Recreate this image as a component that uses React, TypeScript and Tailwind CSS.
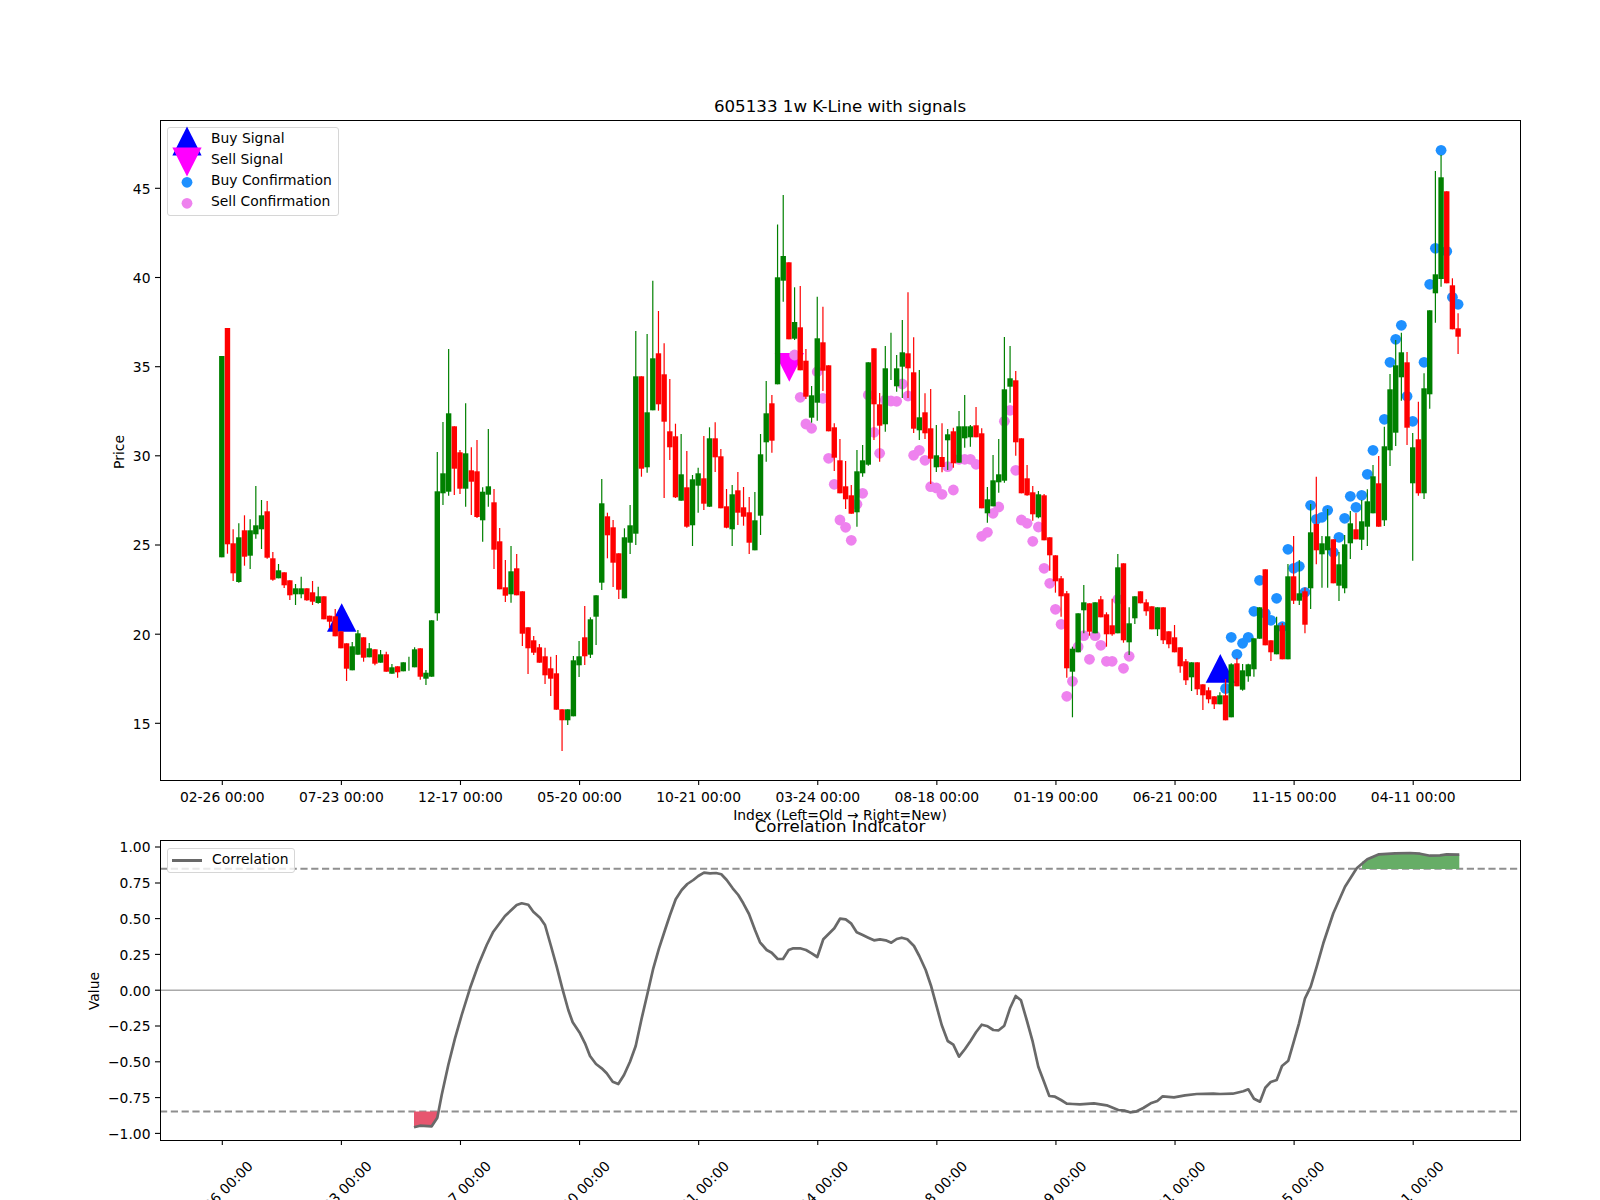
const X0 = 221.8;
const STEP = 5.671;
const xOf = (i: number) => X0 + i * STEP;

// [colour, wick top, body top, body bottom, wick bottom], page pixels, oldest first
type Candle = ["g" | "r", number, number, number, number];
const candles: Candle[] = [
  ["g", 356, 356, 557.3, 557.3], ["r", 328, 328, 544.3, 553.7], ["r", 529.3, 543.3, 573.3, 581], ["g", 523.3, 537.3, 582, 582.7],
  ["r", 515.3, 530.3, 556.7, 565.7], ["g", 519.3, 530.3, 555.7, 569], ["g", 486, 525.3, 534.3, 538.7], ["g", 500, 515.3, 529.3, 549],
  ["r", 501, 511.3, 557.7, 558.7], ["r", 552, 558.3, 579.7, 580.7], ["g", 564, 570.3, 578.3, 578.3], ["r", 572.3, 572.3, 585.3, 588],
  ["r", 580.3, 580.3, 595.3, 600], ["g", 584, 588.3, 594.3, 605], ["g", 576.7, 588.3, 594.3, 598.3], ["r", 588.3, 588.3, 600.3, 600.7],
  ["r", 581, 592.3, 601.7, 605], ["g", 586.7, 596.3, 603, 603.7], ["r", 596.3, 596.3, 619.3, 619.3], ["r", 615.7, 615.7, 621.7, 628],
  ["r", 609, 616.3, 636.3, 636.3], ["r", 631.3, 631.3, 648.3, 648.3], ["r", 643.3, 643.3, 668.7, 681], ["g", 642, 646.3, 670.3, 670.3],
  ["g", 630, 633.3, 654.7, 654.7], ["r", 637.3, 637.3, 657.7, 661.7], ["g", 643, 648.3, 657.3, 657.3], ["r", 649.3, 649.3, 663.7, 665.3],
  ["g", 650, 654.3, 662.7, 662.7], ["r", 651.7, 654.3, 671.7, 671.7], ["g", 664, 667.3, 673.7, 673.7], ["r", 666.3, 666.3, 672.3, 677.7],
  ["g", 662.3, 662.3, 671.3, 671.3], ["g", 656.7, 664, 664, 670.7], ["g", 647.3, 649.3, 667.3, 667.3], ["r", 648.3, 648.3, 676.7, 679.7],
  ["g", 670, 672.7, 678.7, 685], ["g", 620.3, 620.3, 676.7, 676.7], ["g", 452, 491.3, 613.3, 620.7], ["g", 422, 473.3, 493.3, 505],
  ["g", 349, 413.3, 491.7, 495.7], ["r", 426.3, 426.3, 468.7, 495], ["r", 450, 452.3, 488.7, 494], ["g", 403.3, 453.3, 488.7, 506.7],
  ["r", 447.3, 470.3, 481.7, 515], ["r", 440, 471.3, 517, 518], ["g", 487.3, 491.7, 520.3, 541.7], ["g", 429, 486.3, 494.7, 506.7],
  ["r", 489, 502.3, 549.7, 569], ["r", 528, 541.3, 589.3, 589.3], ["r", 560, 587.3, 595.7, 602], ["g", 546, 571.3, 594.3, 602.7],
  ["r", 554, 568.3, 595.3, 595.3], ["r", 591.3, 591.3, 633.7, 646], ["r", 627.3, 627.3, 648.3, 674], ["r", 636, 640.3, 652.7, 655],
  ["r", 644, 647.3, 662.7, 662.7], ["r", 647.7, 656.3, 675.3, 684], ["r", 656.7, 668.3, 678.7, 696], ["r", 655, 673.3, 709.7, 709.7],
  ["r", 709.3, 709.3, 720.3, 751], ["g", 709.3, 709.3, 720.3, 725], ["g", 656, 660.3, 716.3, 716.3], ["g", 641, 656.3, 665.3, 677],
  ["r", 606, 637.3, 656.3, 665], ["g", 617.3, 619.3, 654.7, 658], ["g", 595.3, 595.3, 616.7, 645], ["g", 479, 503.3, 582.7, 590],
  ["r", 512.7, 516.3, 535.3, 558.3], ["r", 520, 527.3, 562.7, 587], ["r", 553.3, 553.3, 589.7, 599], ["g", 528.3, 537.3, 598.3, 598.3],
  ["g", 505, 525.3, 542.7, 554], ["g", 331, 376.3, 533.7, 545], ["r", 376.3, 376.3, 468.7, 476.7], ["g", 334, 412.3, 467.3, 472.7],
  ["g", 280.7, 358.3, 410.3, 410.3], ["r", 311, 353.3, 404.3, 410.7], ["r", 343.3, 374.3, 421.7, 498], ["r", 379, 431.3, 447.3, 460],
  ["r", 423.7, 436.3, 497.3, 498], ["g", 434, 474.3, 500.7, 500.7], ["r", 451, 487.3, 526.7, 527.7], ["g", 475, 479.3, 525.3, 546],
  ["g", 467.7, 473.3, 485.7, 512.7], ["r", 436, 478.3, 503.7, 510], ["g", 427.3, 438.3, 506.7, 507], ["r", 422.3, 438.3, 457.3, 472],
  ["r", 449, 456.3, 508.3, 508.3], ["r", 489, 506.3, 527.7, 528.3], ["g", 485, 494.3, 529.3, 546], ["r", 472, 490.3, 512.7, 525],
  ["r", 487, 507.3, 516.7, 525.7], ["r", 497, 512.3, 542.7, 554], ["g", 492, 520.3, 550.3, 550.3], ["g", 434, 454.3, 515.7, 535],
  ["g", 381, 413.3, 442.3, 461.7], ["r", 395, 403.3, 440.7, 452.7], ["g", 224.5, 277.3, 384.3, 384.3], ["g", 195, 256, 280.7, 301.7],
  ["r", 262.3, 262.3, 339.3, 339.3], ["g", 287.3, 322, 338.7, 340], ["r", 286, 327.3, 370.3, 370.3], ["r", 349, 360.7, 396.7, 399],
  ["g", 386, 395.3, 417.7, 422.7], ["g", 296.7, 338.3, 402.7, 420.7], ["r", 306.7, 342.3, 370.7, 391], ["r", 365.3, 365.3, 431.3, 431.3],
  ["r", 423.3, 427.3, 457.7, 471], ["r", 439, 460.3, 493.3, 493.3], ["r", 461, 486.3, 499.3, 509], ["r", 485, 495.3, 513.7, 513.7],
  ["g", 450, 471.3, 512.3, 526.7], ["g", 445, 460.3, 473.3, 476.7], ["g", 362.3, 362.3, 464.7, 465.7], ["r", 348.3, 348.3, 404.3, 440],
  ["r", 393, 404.3, 425.7, 461.7], ["g", 346, 368.3, 424.3, 431.7], ["g", 332.7, 356, 356, 380], ["g", 355, 368.3, 386.3, 391.7],
  ["g", 320, 352.3, 366.7, 398], ["r", 292.3, 353.3, 368.3, 398], ["r", 337.3, 372.3, 428.7, 433], ["g", 370, 417.3, 430.3, 440],
  ["r", 393.3, 412.3, 433.3, 439], ["r", 389, 428.3, 458.7, 484], ["g", 425, 455.3, 467.3, 472], ["r", 423.3, 457, 467, 472.3],
  ["g", 429, 434.3, 440.3, 470], ["r", 427.7, 431.3, 463.3, 467.7], ["g", 411, 426.3, 462.7, 462.7], ["g", 395, 426.3, 438.3, 447.7],
  ["g", 425, 426.3, 437.3, 446.7], ["r", 407, 425.3, 437.3, 437.3], ["r", 428.3, 433.3, 508.3, 508.3], ["g", 487, 499.3, 513.3, 522.7],
  ["g", 455, 480.3, 506.3, 506.3], ["g", 439, 474.3, 482.3, 492.7], ["g", 337, 389.3, 480.7, 482.7], ["g", 346, 378.3, 386.7, 402.7],
  ["r", 371, 380.3, 442.3, 455.7], ["r", 438.3, 438.3, 493.3, 493.3], ["r", 465, 478.3, 495.3, 495.7], ["r", 486, 492.3, 514.3, 520.7],
  ["g", 491, 494.3, 517.3, 518.3], ["r", 494, 495.3, 540.3, 540.3], ["r", 537.3, 537.3, 555.3, 570.7], ["r", 555.3, 555.3, 581.3, 592.7],
  ["r", 576, 578.3, 596.3, 616.7], ["r", 591, 593.3, 668.3, 677.7], ["g", 646.7, 648.7, 671.7, 717.3], ["g", 613.3, 613.3, 652.3, 652.3],
  ["g", 585, 602.3, 610.3, 633.3], ["r", 603.3, 603.3, 631.7, 635.7], ["g", 602.3, 602.3, 633.3, 633.3], ["r", 596, 599.3, 617.3, 617.3],
  ["r", 612.3, 614.3, 634.3, 646.7], ["r", 598.7, 625.3, 634.3, 635.7], ["g", 554, 567.3, 633.3, 633.3], ["r", 563.3, 563.3, 640.3, 642.7],
  ["g", 607.3, 623.3, 642.3, 655], ["g", 596.3, 596.3, 618.3, 624], ["r", 591.3, 591.3, 603.3, 603.3], ["r", 599.3, 602.3, 611.3, 615.7],
  ["r", 606.3, 606.3, 629.3, 629.3], ["g", 607.3, 607.3, 629.3, 636], ["r", 607.3, 607.3, 640.3, 644], ["r", 631.3, 631.3, 644.3, 648.3],
  ["r", 625, 637.3, 652.3, 652.3], ["r", 647.3, 647.3, 666.3, 672.7], ["r", 659, 661.3, 680.3, 685], ["g", 662.3, 662.3, 677.3, 691],
  ["r", 662.3, 662.3, 689.3, 695], ["r", 684.3, 684.3, 695.3, 710], ["r", 687.3, 690.3, 699.3, 703.3], ["r", 696.3, 696.3, 704.3, 709],
  ["g", 692.3, 695.3, 704.3, 704.3], ["r", 679, 695.3, 720.3, 720.3], ["g", 663.3, 664.3, 717.3, 717.3], ["r", 658.3, 663.3, 686.3, 686.3],
  ["g", 664, 670.3, 689.7, 690.7], ["g", 663.7, 664.3, 676.3, 681.7], ["g", 638.3, 638.3, 669.3, 676.7], ["g", 607.3, 607.3, 638.7, 638.7],
  ["r", 569.3, 569.3, 645.3, 645.3], ["r", 640.3, 640.3, 652.3, 661], ["g", 616.7, 625.3, 654.3, 654.3], ["r", 623, 625.3, 659.3, 659.3],
  ["g", 564, 576.3, 659.3, 659.3], ["r", 536, 576.3, 600.7, 604], ["g", 560, 593.3, 600.7, 605], ["r", 587.7, 591.3, 624.7, 633.3],
  ["g", 504, 532.3, 588.3, 609], ["r", 476.7, 524, 550.3, 564.3], ["g", 536, 543.3, 554.3, 587.7], ["g", 509, 536.3, 550.3, 587.7],
  ["r", 539.3, 539.3, 583.3, 583.3], ["g", 552, 564.3, 585.7, 601], ["g", 535, 544.3, 588.3, 593.3], ["g", 511, 523.3, 543.3, 559],
  ["r", 513, 529.3, 539.3, 539.3], ["g", 500, 521.3, 539.7, 550], ["g", 489.3, 501.3, 526.7, 546], ["g", 465, 476.3, 513.3, 513.3],
  ["r", 456, 483.3, 526.7, 526.7], ["g", 426.7, 446.3, 520.3, 526], ["g", 374, 389.3, 450.3, 466], ["g", 340, 365.3, 432.7, 446],
  ["g", 332.7, 352.3, 377.3, 400.7], ["r", 352, 362.3, 427.7, 445], ["g", 433, 447.3, 483.3, 560.7], ["r", 401.7, 439.3, 493.3, 495.7],
  ["g", 373.3, 388.3, 493.3, 499], ["g", 310.3, 310.3, 394.3, 408.7], ["g", 171, 274.3, 293.3, 322.7], ["g", 155, 177.3, 279, 286.7],
  ["r", 191.3, 191.3, 283.3, 283.3], ["r", 278.3, 285.3, 329.3, 329.3], ["r", 313.3, 328.3, 336.7, 354],
];

// [candle index, y]
const sellDots = [
  [101, 355], [102, 397.3], [103, 424], [104, 428.3], [105, 371.7], [106, 398.3], [107, 458.3], [108, 484.3], [109, 520], [110, 527.3],
  [111, 540.3], [112, 504.3], [113, 493.3], [114, 395], [115, 432.3], [116, 453.3], [117, 400], [118, 401], [119, 401.3], [120, 384],
  [121, 396], [122, 455.3], [123, 450.3], [124, 460.3], [125, 486.7], [126, 488], [127, 494.3], [128, 466.7], [129, 490], [130, 459.3],
  [131, 459.3], [132, 459.3], [133, 464.3], [134, 536.3], [135, 532.3], [136, 513.3], [137, 507], [138, 421.3], [139, 410.3], [140, 470.3],
  [141, 520], [142, 523.3], [143, 541.3], [144, 527], [145, 568.3], [146, 583.3], [147, 609.3], [148, 624.3], [149, 696.3], [150, 681.3],
  [151, 646.7], [152, 635.7], [153, 659.3], [154, 635.7], [155, 645.3], [156, 661.3], [157, 661.3], [158, 599.3], [159, 668.3], [160, 656.3],
];
const buyDots = [
  [177, 688.5], [178, 637.3], [179, 654.3], [180, 643.3], [181, 637.3], [182, 611.3], [183, 580.3], [184, 613.3], [185, 620.3], [186, 598.3],
  [187, 626.7], [188, 549.3], [189, 568.3], [190, 566.3], [191, 592.3], [192, 505.3], [193, 519.3], [194, 517.3], [195, 510.3], [196, 552.3],
  [197, 537.3], [198, 518.3], [199, 496.3], [200, 507.3], [201, 495.3], [202, 474.3], [203, 450.3], [205, 419.3], [206, 362.3], [207, 339.3],
  [208, 325.3], [209, 396.3], [210, 421.3], [212, 362.3], [213, 284.3], [214, 248.3], [215, 150.3], [216, 251.3], [217, 297.3], [218, 304.3],
];

const corrLine: [number, number][] = [
  [414, 1127.3], [420, 1125.7], [431.7, 1126.3], [437.3, 1117.7], [441.7, 1095], [448.3, 1065], [455, 1038.3], [461.7, 1015], [470, 988.3], [478.3, 965],
  [486.7, 945], [493.3, 931.7], [505, 916], [516.7, 905], [521.7, 903.3], [528.3, 904.7], [533.3, 911.7], [540, 917.7], [545, 925], [550.7, 945],
  [556.7, 966.7], [562.3, 988.3], [568.3, 1010], [572.7, 1022.3], [580, 1033.3], [585, 1043.3], [590, 1056], [596, 1064], [601.7, 1068.3], [606.7, 1073.3],
  [612.7, 1081.7], [618.3, 1084], [624, 1075], [630, 1061.7], [635.7, 1046], [641.7, 1018.3], [648.3, 990], [653.3, 968.3], [659, 948.3], [665, 930],
  [670, 915], [675.7, 899.3], [681.7, 890], [687.3, 884], [693.3, 880], [698.3, 876], [704, 872.7], [710, 873.3], [716, 873], [721.3, 874.3],
  [726.7, 880], [732.7, 888.3], [738.3, 895], [743.3, 903.3], [749, 914], [755, 930], [760, 942.3], [766.7, 950], [771.7, 952.7], [777.7, 959],
  [783, 959], [788.7, 950], [793.3, 948.3], [800, 948.3], [806, 950], [811.7, 953.3], [817.3, 957], [823.3, 939.3], [828.3, 934.3], [834.3, 928.3],
  [840, 918.7], [845.7, 919.3], [851, 923.3], [856.7, 932.3], [862.7, 935], [868.3, 937.7], [874, 940.3], [880, 939.3], [885.7, 940.3], [891.3, 942.7],
  [896.7, 939], [901.7, 937.7], [907.3, 939.3], [914, 946], [919.3, 956], [925.7, 970], [931, 985.7], [936.7, 1006.7], [941.7, 1025], [947.7, 1041],
  [953.3, 1044.7], [959, 1056.7], [965, 1049], [970.7, 1040.7], [976, 1032.3], [981.7, 1024.7], [987.7, 1026.3], [993.3, 1030], [998.7, 1030.3], [1004.3, 1025.7],
  [1010, 1008.3], [1015.7, 996], [1021, 1000.3], [1026.7, 1020], [1032.7, 1041.7], [1038.3, 1066.7], [1044, 1081.7], [1049.3, 1096], [1055, 1096.7], [1061, 1100],
  [1066.7, 1103.7], [1072.7, 1104], [1080, 1104.3], [1094, 1103.3], [1106.7, 1105.3], [1118.3, 1110], [1125, 1110.7], [1130, 1112.3], [1136.7, 1111.3], [1143.3, 1108],
  [1150.7, 1103.3], [1157.3, 1101], [1162.7, 1096.3], [1174, 1097.3], [1185, 1095.3], [1196.7, 1094], [1213.3, 1093.7], [1220, 1094], [1232.7, 1093.7], [1243.3, 1091.3],
  [1248.3, 1089.3], [1254, 1098.7], [1260, 1101.7], [1265.3, 1087.7], [1270.7, 1082], [1276.7, 1080], [1282, 1066], [1288.3, 1060.7], [1293.3, 1043.3], [1299, 1023.3],
  [1305, 998.3], [1310.7, 986.7], [1316.7, 966.7], [1323.3, 943.3], [1333.3, 913.3], [1345, 886.7], [1356.7, 868.3], [1367.3, 859.3], [1379, 854.3], [1395, 853.3],
  [1410, 853], [1420, 853.7], [1430, 855.7], [1440, 855.3], [1446.7, 854.3], [1459.3, 854.7],
];

const toPath = (pts: [number, number][]) => pts.map((p) => p.join(",")).join(" ");
const redFill = toPath([[414, 1111.5], [438.3, 1111.5], ...corrLine.filter((p) => p[0] <= 437.3).reverse()]);
const greenFill = toPath([[1362, 869], [1459.3, 869], ...corrLine.filter((p) => p[0] >= 1367).reverse(), [1362, 861.7]]);

const xTicks = ["02-26 00:00", "07-23 00:00", "12-17 00:00", "05-20 00:00", "10-21 00:00", "03-24 00:00", "08-18 00:00", "01-19 00:00", "06-21 00:00", "11-15 00:00", "04-11 00:00"];
const priceTicks: [string, number][] = [["45", 188.3], ["40", 277.5], ["35", 366.7], ["30", 455.8], ["25", 545], ["20", 634.2], ["15", 723.3]];
const corrTicks: [string, number][] = [
  ["1.00", 847], ["0.75", 883], ["0.50", 918.6], ["0.25", 954.4], ["0.00", 990.2],
  ["−0.25", 1026], ["−0.50", 1061.8], ["−0.75", 1097.6], ["−1.00", 1133.4],
];
const tickX = (n: number) => X0 + 0.5 + n * 21 * STEP;

const LegendRow = ({ label, children }: { label: string; children: React.ReactNode }) => (
  <div className="flex h-[21px] items-center">
    <svg viewBox="-19 -10.5 38 21" className="h-[21px] w-[38px] overflow-visible">
      {children}
    </svg>
    <span className="ml-[5px] whitespace-nowrap">{label}</span>
  </div>
);

const Ticks = ({ ys, bottom }: { ys: [string, number][]; bottom: number }) => (
  <g>
    {ys.map(([label, y]) => (
      <g key={label}>
        <line x1={155} x2={160} y1={y} y2={y} stroke="#000" strokeWidth={1.1} />
        <text x={150.5} y={y + 5.3} textAnchor="end" fontSize={13.89}>{label}</text>
      </g>
    ))}
    {xTicks.map((label, n) => (
      <line key={label} x1={tickX(n)} x2={tickX(n)} y1={bottom} y2={bottom + 5} stroke="#000" strokeWidth={1.1} />
    ))}
  </g>
);

export default function App() {
  return (
    <div className="h-[1200px] w-[1600px] overflow-hidden bg-white font-['DejaVu_Sans',sans-serif] text-[13.89px] leading-none text-black">
      <div className="ml-[160px] flex h-[120px] w-[1360px] items-end justify-center pb-[4px] text-[16.67px]">
        605133 1w K-Line with signals
      </div>

      <div className="relative h-[700px]">
        <svg viewBox="0 120 1600 700" className="block h-[700px] w-[1600px] overflow-visible">
          <g fill="#0000ff">
            <polygon points="341.7,603.3 327,631.7 356.4,631.7" />
            <polygon points="1220.3,654 1205.7,682.7 1235,682.7" />
          </g>
          <polygon points="789.3,381.7 774.7,353 804,353" fill="#ff00ff" />
          {sellDots.map(([i, y]) => <circle key={i} cx={xOf(i)} cy={y} r={5.4} fill="#ee82ee" />)}
          {buyDots.map(([i, y]) => <circle key={i} cx={xOf(i)} cy={y} r={5.4} fill="#1e90ff" />)}
          {candles.map(([c, hi, top, bottom, lo], i) => {
            const color = c === "g" ? "#008000" : "#ff0000";
            const x = xOf(i);
            return (
              <g key={i}>
                <line x1={x} x2={x} y1={hi} y2={lo} stroke={color} strokeWidth={1.2} />
                {bottom > top && <rect x={x - 2.7} y={top} width={5.4} height={bottom - top} fill={color} />}
              </g>
            );
          })}
          <rect x={160.5} y={120.5} width={1360} height={660} fill="none" stroke="#000" strokeWidth={1} />
          <Ticks ys={priceTicks} bottom={780} />
          {xTicks.map((label, n) => (
            <text key={label} x={tickX(n)} y={802} textAnchor="middle" fontSize={13.89}>{label}</text>
          ))}
          <text transform="translate(124 452) rotate(-90)" textAnchor="middle" fontSize={13.89}>Price</text>
          <text x={840} y={820} textAnchor="middle" fontSize={13.89}>Index (Left=Old → Right=New)</text>
        </svg>

        <div className="absolute left-[167px] top-[7px] w-[172px] rounded-[3px] border border-[#d6d6d6] bg-white/80 pb-[2.5px] pt-[0.5px]">
          <LegendRow label="Buy Signal">
            <polygon points="0,-13 -14.6,15.9 14.6,15.9" fill="#0000ff" />
          </LegendRow>
          <LegendRow label="Sell Signal">
            <polygon points="0,16 -14.6,-12.9 14.6,-12.9" fill="#ff00ff" />
          </LegendRow>
          <LegendRow label="Buy Confirmation">
            <circle cx={0} cy={0.8} r={5.4} fill="#1e90ff" />
          </LegendRow>
          <LegendRow label="Sell Confirmation">
            <circle cx={0} cy={0.8} r={5.4} fill="#ee82ee" />
          </LegendRow>
        </div>
      </div>

      <div className="ml-[160px] flex h-[20px] w-[1360px] items-end justify-center pb-[4px] text-[16.67px]">
        Correlation Indicator
      </div>

      <div className="relative h-[360px]">
        <svg viewBox="0 840 1600 360" className="block h-[360px] w-[1600px] overflow-visible">
          <line x1={160} x2={1520} y1={868.8} y2={868.8} stroke="#8f8f8f" strokeWidth={1.9} strokeDasharray="7.2 3.6" />
          <line x1={160} x2={1520} y1={1111.5} y2={1111.5} stroke="#8f8f8f" strokeWidth={1.9} strokeDasharray="7.2 3.6" />
          <line x1={160} x2={1520} y1={990.2} y2={990.2} stroke="#aaaaaa" strokeWidth={1.6} />
          <polygon points={redFill} fill="#e7566f" />
          <polygon points={greenFill} fill="#66ad66" />
          <polyline points={toPath(corrLine)} fill="none" stroke="#696969" strokeWidth={2.7} strokeLinejoin="round" />
          <rect x={160.5} y={840.5} width={1360} height={300} fill="none" stroke="#000" strokeWidth={1} />
          <Ticks ys={corrTicks} bottom={1140} />
          {xTicks.map((label, n) => (
            <text key={label} transform={`translate(${tickX(n) + 1.5} 1197) rotate(-45)`} textAnchor="middle" fontSize={13.89}>{label}</text>
          ))}
          <text transform="translate(98.5 991) rotate(-90)" textAnchor="middle" fontSize={13.89}>Value</text>
        </svg>

        <div className="absolute left-[167px] top-[7.5px] flex h-[25px] w-[128px] items-center rounded-[3px] border border-[#d6d6d6] bg-white/80">
          <span className="ml-[4px] h-[3px] w-[30px] bg-[#696969]" />
          <span className="ml-[10px]">Correlation</span>
        </div>
      </div>
    </div>
  );
}
